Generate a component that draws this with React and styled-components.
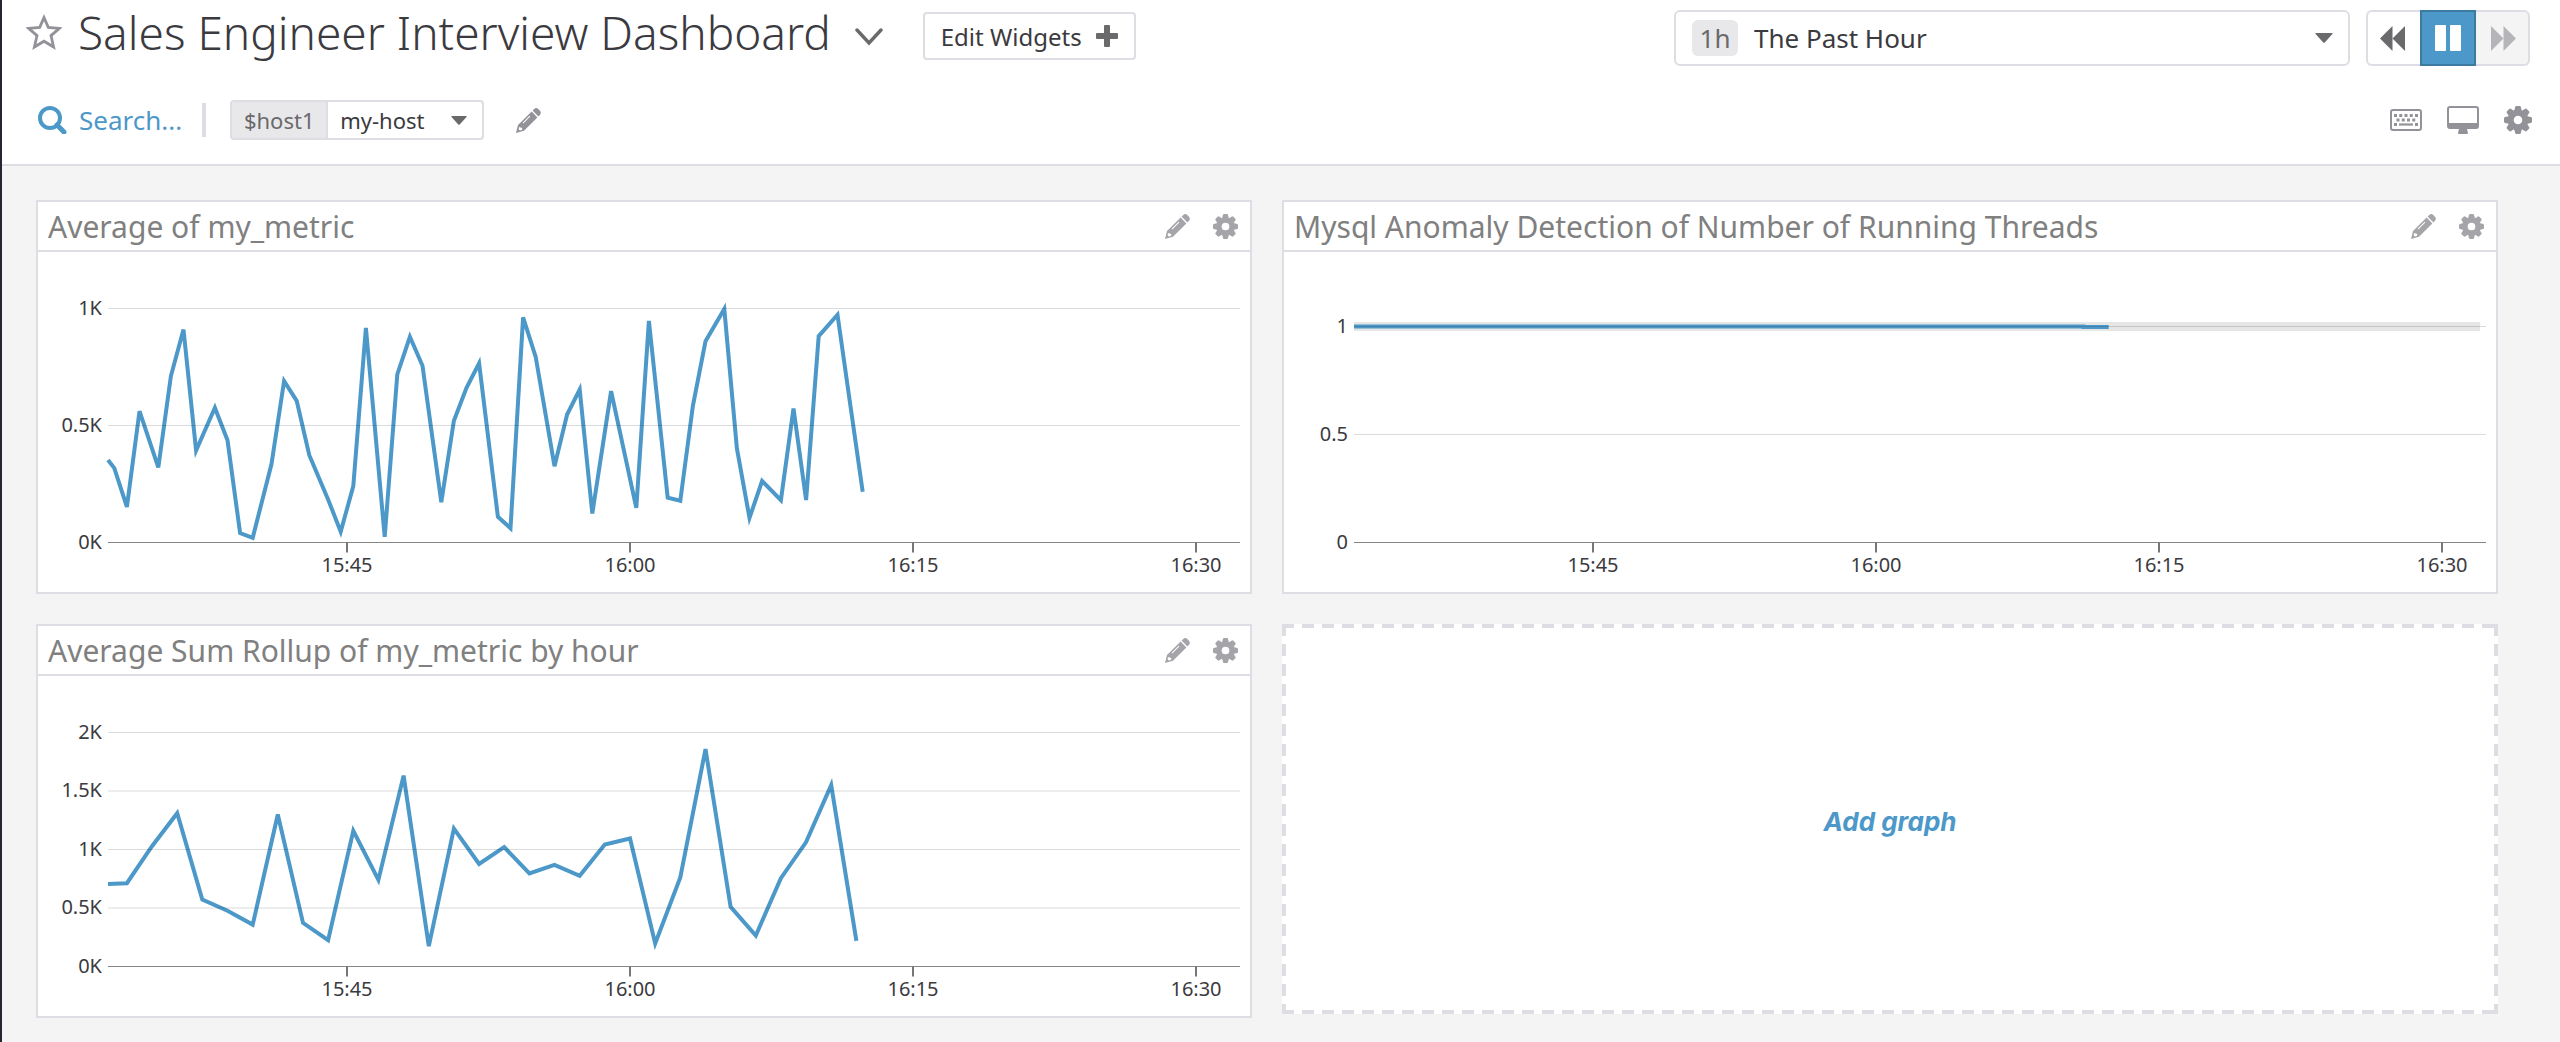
import React from "react";
import styled, { createGlobalStyle } from "styled-components";

const GlobalStyle = createGlobalStyle`
  *, *::before, *::after { box-sizing: border-box; }
  body {
    margin: 0;
    background: #f4f4f4;
    color: #3b3a3f;
    font-family: "Noto Sans", sans-serif;
  }
  button, select { font: inherit; color: inherit; margin: 0; cursor: pointer; }
  h1, h2 { margin: 0; }
  svg { display: block; flex: none; }
`;

const Page = styled.div`
  min-height: 100vh;
  border-left: 2px solid #2a2336;
  background: #f4f4f4;
`;

const Header = styled.header`
  background: #fff;
  border-bottom: 2px solid #dedde3;
`;

const TitleBar = styled.div`
  display: flex;
  align-items: flex-start;
  justify-content: space-between;
  height: 76px;
  padding: 10px 30px 0 24px;
`;

const TitleGroup = styled.div`
  display: flex;
  align-items: flex-start;
`;

const IconButton = styled.button`
  display: flex;
  align-items: center;
  justify-content: center;
  padding: 0;
  border: 0;
  background: none;
  color: ${(p) => p.$color || "#949299"};
`;

const StarButton = styled(IconButton)`
  height: 44px;
  margin-right: 16px;
`;

const PageTitle = styled.h1`
  font-size: 46px;
  line-height: 44px;
  font-weight: 300;
  white-space: nowrap;
`;

const ChevronButton = styled(IconButton)`
  height: 54px;
  margin-left: 24px;
`;

const EditButton = styled.button`
  display: flex;
  align-items: center;
  gap: 14px;
  height: 48px;
  margin: 2px 0 0 40px;
  padding: 0 16px;
  border: 2px solid #dedde3;
  border-radius: 4px;
  background: #fff;
  font-size: 24px;
  white-space: nowrap;
`;

const TimeGroup = styled.div`
  display: flex;
  gap: 16px;
`;

const TimePicker = styled.label`
  display: grid;
  grid-template-columns: 78px 1fr 33px;
  align-items: center;
  width: 676px;
  height: 56px;
  border: 2px solid #dedde3;
  border-radius: 6px;
  background: #fff;
`;

const Badge = styled.span`
  grid-area: 1 / 1;
  justify-self: start;
  margin-left: 16px;
  width: 46px;
  height: 36px;
  border-radius: 6px;
  background: #e8e8ea;
  color: #6a696c;
  font-size: 26px;
  line-height: 36px;
  text-align: center;
  pointer-events: none;
`;

const PlainSelect = styled.select`
  grid-area: 1 / 1 / 2 / -1;
  width: 100%;
  height: 100%;
  padding: 0 0 0 ${(p) => p.$indent}px;
  border: 0;
  outline: 0;
  appearance: none;
  background: transparent;
  font-size: ${(p) => p.$size}px;
`;

const CaretSlot = styled.span`
  grid-area: 1 / -2;
  pointer-events: none;
`;

const Playback = styled.div`
  display: flex;
  width: 164px;
  height: 56px;
`;

const PlayButton = styled.button`
  display: flex;
  flex: 1;
  align-items: center;
  justify-content: center;
  padding: ${(p) => (p.$side === "left" ? "0 3px 0 0" : "0 0 0 3px")};
  border: 2px solid #dedde3;
  border-width: ${(p) => (p.$side === "left" ? "2px 0 2px 2px" : "2px 2px 2px 0")};
  border-radius: ${(p) => (p.$side === "left" ? "6px 0 0 6px" : "0 6px 6px 0")};
  background: ${(p) => (p.$side === "left" ? "#fff" : "#f4f4f4")};
  color: ${(p) => (p.$side === "left" ? "#6a696c" : "#b5b4b9")};
`;

const PauseButton = styled.button`
  display: flex;
  align-items: center;
  justify-content: center;
  width: 56px;
  padding: 0;
  border: 2px solid #3d7aa1;
  background: #4c98c9;
  color: #fff;
`;

const FilterBar = styled.div`
  display: flex;
  align-items: center;
  justify-content: space-between;
  height: 88px;
  padding: 0 28px 0 36px;
`;

const FilterGroup = styled.div`
  display: flex;
  align-items: center;
`;

const SearchButton = styled.button`
  display: flex;
  align-items: center;
  gap: 12px;
  padding: 0;
  border: 0;
  background: none;
  color: #4c98c9;
  font-size: 26px;
  line-height: 36px;
`;

const Divider = styled.span`
  width: 4px;
  height: 34px;
  margin: 0 24px 0 20px;
  background: #dedde3;
`;

const Variable = styled.div`
  display: flex;
  height: 40px;
  margin-right: 32px;
  border: 2px solid #dedde3;
  border-radius: 4px;
  background: #fff;
  overflow: hidden;
`;

const VariableName = styled.label`
  width: 96px;
  border-right: 2px solid #dedde3;
  background: #e8e8ea;
  color: #6a696c;
  font-size: 22px;
  line-height: 36px;
  text-align: center;
`;

const VariablePicker = styled.div`
  display: grid;
  grid-template-columns: 1fr 31px;
  align-items: center;
  width: 154px;
`;

const ToolGroup = styled.div`
  display: flex;
  align-items: center;
  gap: 25px;
`;

const Board = styled.main`
  display: grid;
  grid-template-columns: 1fr 1fr;
  gap: 30px;
  padding: 34px 62px 24px 34px;
`;

const Widget = styled.section`
  border: 2px solid #dedde3;
  background: #fff;
`;

const WidgetHeader = styled.div`
  display: flex;
  align-items: center;
  justify-content: space-between;
  height: 50px;
  padding: 0 12px 0 10px;
  border-bottom: 2px solid #dedde3;
`;

const WidgetTitle = styled.h2`
  padding-top: 2px;
  color: #808080;
  font-size: 30px;
  line-height: 46px;
  font-weight: 400;
  white-space: nowrap;
`;

const WidgetTools = styled.div`
  display: flex;
  align-items: center;
  gap: 23px;
`;

const ChartSvg = styled.svg`
  width: 100%;
  height: auto;
`;

const AxisText = styled.text`
  fill: #3b3a3f;
  font-family: "Noto Sans", sans-serif;
  font-size: 20px;
`;

/* The outline uses longer dashes (12px, 8px apart) than border-style: dashed gives. */
const AddGraph = styled.button`
  --dash-x: repeating-linear-gradient(90deg, #dedde3 0 12px, transparent 12px 20px);
  --dash-y: repeating-linear-gradient(180deg, #dedde3 0 12px, transparent 12px 20px);
  display: block;
  margin-bottom: 4px;
  padding: 4px 0 0;
  border: 0;
  background:
    linear-gradient(#dedde3, #dedde3) right top / 12px 4px no-repeat,
    linear-gradient(#dedde3, #dedde3) right bottom / 12px 4px no-repeat,
    var(--dash-x) left top / 100% 4px no-repeat,
    var(--dash-x) left bottom / 100% 4px no-repeat,
    var(--dash-y) left top / 4px 100% no-repeat,
    var(--dash-y) right top / 4px 100% no-repeat,
    #fff;
  color: #4c98c9;
  font-family: Inter, "Liberation Sans", sans-serif;
  font-size: 26px;
  font-weight: 700;
  font-style: italic;
`;

const StarIcon = () => (
  <svg width="36" height="36" viewBox="0 0 36 36" fill="none" stroke="currentColor" strokeWidth="2.8">
    <path d="M18 3.6 L22.3 13.4 L33.4 14.4 L25 21.6 L27.6 33 L18 27.2 L8.4 33 L11 21.6 L2.6 14.4 L13.7 13.4 Z" />
  </svg>
);

const ChevronIcon = () => (
  <svg width="28" height="18" viewBox="0 0 28 18" fill="none" stroke="currentColor" strokeWidth="3.4">
    <path d="M2 2 L14 15 L26 2" strokeLinecap="round" />
  </svg>
);

const PlusIcon = () => (
  <svg width="22" height="22" viewBox="0 0 22 22" fill="#6a696c">
    <rect x="8" width="6" height="22" rx="1" />
    <rect y="8" width="22" height="6" rx="1" />
  </svg>
);

const Caret = ({ width, height }) => (
  <svg width={width} height={height} viewBox="0 0 18 10" preserveAspectRatio="none" fill="#6a696c">
    <path d="M1 0 H17 Q18 0 17.4 1 L9.8 9.4 Q9 10.2 8.2 9.4 L.6 1 Q0 0 1 0 Z" />
  </svg>
);

const DoubleArrow = ({ flip }) => (
  <svg width="25" height="25" viewBox="0 0 25 25" fill="currentColor">
    <g transform={flip ? "translate(25 0) scale(-1 1)" : undefined}>
      <path d="M12.5 0 V25 L0 12.5 Z" />
      <path d="M25 0 V25 L12.5 12.5 Z" />
    </g>
  </svg>
);

const PauseIcon = () => (
  <svg width="26" height="26" viewBox="0 0 26 26" fill="currentColor">
    <rect width="11" height="26" rx="1" />
    <rect x="15" width="11" height="26" rx="1" />
  </svg>
);

const SearchIcon = () => (
  <svg width="29" height="28" viewBox="0 0 29 28" fill="none" stroke="currentColor">
    <circle cx="12" cy="12" r="10" strokeWidth="4" />
    <path d="M19 19 L26 26" strokeWidth="5" strokeLinecap="round" />
  </svg>
);

const PencilIcon = () => (
  <svg width="25" height="25" viewBox="0 0 25 25" fill="currentColor">
    <path d="M18 1.2 Q20 -.8 22 .8 L24.2 3 Q25.6 5 23.8 7 L22.4 8.4 L16.6 2.6 Z" />
    <path
      fillRule="evenodd"
      d="M15.6 3.6 L21.4 9.4 L8 22.8 L0 25 L2 17 Z M3.4 18.8 L2.6 21.2 L3.9 22.5 L6.2 21.8 L6 19.8 L4.2 19.6 Z M13.6 7.8 L6.6 14.8 L7.3 15.5 L14.3 8.5 Z"
    />
  </svg>
);

const GearIcon = ({ size }) => (
  <svg width={size} height={size} viewBox="-14 -14 28 28" fill="currentColor">
    <circle r="7.3" fill="none" stroke="currentColor" strokeWidth="6" />
    {[0, 45, 90, 135, 180, 225, 270, 315].map((a) => (
      <path key={a} transform={`rotate(${a})`} d="M-3.8 -9 L-2.9 -13 Q-2.6 -14 -1.6 -14 H1.6 Q2.6 -14 2.9 -13 L3.8 -9 Z" />
    ))}
  </svg>
);

const KeyboardIcon = () => (
  <svg width="32" height="22" viewBox="0 0 32 22" fill="currentColor">
    <rect x="1" y="1" width="30" height="20" rx="2" fill="none" stroke="currentColor" strokeWidth="2" />
    {[4, 9.25, 14.5, 19.75, 25].map((x) => <rect key={x} x={x} y="5" width="3" height="3" />)}
    {[6.5, 11.75, 17, 22.25].map((x) => <rect key={x} x={x} y="9.5" width="3" height="3" />)}
    <rect x="4" y="14" width="3" height="3" />
    <rect x="9" y="14.4" width="14" height="2.2" />
    <rect x="25" y="14" width="3" height="3" />
  </svg>
);

const MonitorIcon = () => (
  <svg width="32" height="28" viewBox="0 0 32 28" fill="currentColor">
    <path
      fillRule="evenodd"
      d="M3 0 H29 Q32 0 32 3 V20 Q32 23 29 23 H20 L21 27 Q21 28 20 28 H12 Q11 28 11 27 L12 23 H3 Q0 23 0 20 V3 Q0 0 3 0 Z M2 3 V17 H30 V3 Q30 2 29 2 H3 Q2 2 2 3 Z"
    />
  </svg>
);

/* Samples are [20-second step, value]; step 37 falls on 15:45. */
const METRIC = [
  [-1, 352], [0, 318], [2, 152], [4, 561], [7, 321], [9, 711], [11, 910], [13, 393], [16, 576],
  [18, 437], [20, 40], [22, 20], [25, 335], [27, 690], [29, 605], [31, 373], [34, 184], [36, 46],
  [38, 241], [40, 917], [43, 24], [45, 719], [47, 879], [49, 755], [52, 172], [54, 520], [56, 661],
  [58, 766], [61, 110], [63, 61], [65, 962], [67, 793], [70, 326], [72, 547], [74, 654], [76, 124],
  [79, 647], [83, 148], [85, 947], [88, 192], [90, 178], [92, 584], [94, 860], [97, 998], [99, 402],
  [101, 105], [103, 263], [106, 181], [108, 573], [110, 181], [112, 882], [115, 973], [117, 594],
  [119, 217],
];

const ROLLUP = [
  [-1, 704], [2, 712], [6, 1028], [10, 1310], [14, 573], [18, 476], [22, 358], [26, 1299], [30, 373],
  [34, 225], [38, 1160], [42, 740], [46, 1632], [50, 174], [54, 1178], [58, 877], [62, 1020],
  [66, 795], [70, 869], [74, 775], [78, 1043], [82, 1094], [86, 197], [90, 761], [94, 1858],
  [98, 510], [102, 265], [106, 755], [110, 1063], [114, 1550], [118, 219],
];

const THREADS = [[-1, 1], [115, 1], [115, 0.997], [119, 0.997]];

const TIMES = ["15:45", "16:00", "16:15", "16:30"];
const LEFT = 70;
const RIGHT = 1202;
const BASE = 290.5;

function Chart({ label, series, unit, ticks, band }) {
  const x = (step) => 76.3 + step * 6.289;
  const y = (value) => BASE - value * unit;
  return (
    <ChartSvg viewBox="0 0 1212 340" role="img" aria-label={label}>
      {band && <rect x={LEFT} y={y(1) - 4.5} width="1126" height="9" fill="#e6e6e6" />}
      <polyline
        points={series.map(([s, v]) => `${x(s).toFixed(1)},${y(v).toFixed(1)}`).join(" ")}
        fill="none"
        stroke="#4c98c9"
        strokeWidth="4"
      />
      {ticks.map(([value, text]) => (
        <g key={text}>
          {value > 0 && (
            <path d={`M${LEFT} ${y(value)} H${RIGHT}`} stroke="#000" strokeOpacity="0.14" />
          )}
          <AxisText x="64" y={y(value) + 6} textAnchor="end">{text}</AxisText>
        </g>
      ))}
      <path d={`M${LEFT} ${BASE} H${RIGHT}`} stroke="#868686" />
      {TIMES.map((time, i) => (
        <g key={time}>
          <path d={`M${309 + i * 283} ${BASE} v10`} stroke="#777" strokeWidth="2" />
          <AxisText x={309 + i * 283} y="320" textAnchor="middle">{time}</AxisText>
        </g>
      ))}
    </ChartSvg>
  );
}

function ChartWidget({ title, ...chart }) {
  return (
    <Widget>
      <WidgetHeader>
        <WidgetTitle>{title}</WidgetTitle>
        <WidgetTools>
          <IconButton $color="#a5a4a9" aria-label="Edit graph"><PencilIcon /></IconButton>
          <IconButton $color="#a5a4a9" aria-label="Graph settings"><GearIcon size={25} /></IconButton>
        </WidgetTools>
      </WidgetHeader>
      <Chart label={title} {...chart} />
    </Widget>
  );
}

export default function App() {
  return (
    <Page>
      <GlobalStyle />
      <Header>
        <TitleBar>
          <TitleGroup>
            <StarButton aria-label="Favorite"><StarIcon /></StarButton>
            <PageTitle>Sales Engineer Interview Dashboard</PageTitle>
            <ChevronButton $color="#6a696c" aria-label="Switch dashboard"><ChevronIcon /></ChevronButton>
            <EditButton>Edit Widgets <PlusIcon /></EditButton>
          </TitleGroup>
          <TimeGroup>
            <TimePicker>
              <PlainSelect $indent={78} $size={26} aria-label="Time range" defaultValue="1h">
                <option value="1h">The Past Hour</option>
              </PlainSelect>
              <Badge>1h</Badge>
              <CaretSlot><Caret width={18} height={10} /></CaretSlot>
            </TimePicker>
            <Playback>
              <PlayButton $side="left" aria-label="Step back"><DoubleArrow /></PlayButton>
              <PauseButton aria-label="Pause"><PauseIcon /></PauseButton>
              <PlayButton $side="right" aria-label="Step forward" disabled><DoubleArrow flip /></PlayButton>
            </Playback>
          </TimeGroup>
        </TitleBar>
        <FilterBar>
          <FilterGroup>
            <SearchButton><SearchIcon />Search...</SearchButton>
            <Divider />
            <Variable>
              <VariableName htmlFor="host1">$host1</VariableName>
              <VariablePicker>
                <PlainSelect id="host1" $indent={12} $size={22} defaultValue="my-host">
                  <option value="my-host">my-host</option>
                </PlainSelect>
                <CaretSlot><Caret width={16} height={9} /></CaretSlot>
              </VariablePicker>
            </Variable>
            <IconButton aria-label="Edit template variables"><PencilIcon /></IconButton>
          </FilterGroup>
          <ToolGroup>
            <IconButton aria-label="Keyboard shortcuts"><KeyboardIcon /></IconButton>
            <IconButton aria-label="TV mode"><MonitorIcon /></IconButton>
            <IconButton aria-label="Dashboard settings"><GearIcon size={28} /></IconButton>
          </ToolGroup>
        </FilterBar>
      </Header>
      <Board>
        <ChartWidget
          title="Average of my_metric"
          series={METRIC}
          unit={0.234}
          ticks={[[1000, "1K"], [500, "0.5K"], [0, "0K"]]}
        />
        <ChartWidget
          title="Mysql Anomaly Detection of Number of Running Threads"
          series={THREADS}
          unit={216}
          ticks={[[1, "1"], [0.5, "0.5"], [0, "0"]]}
          band
        />
        <ChartWidget
          title="Average Sum Rollup of my_metric by hour"
          series={ROLLUP}
          unit={0.117}
          ticks={[[2000, "2K"], [1500, "1.5K"], [1000, "1K"], [500, "0.5K"], [0, "0K"]]}
        />
        <AddGraph>Add graph</AddGraph>
      </Board>
    </Page>
  );
}
